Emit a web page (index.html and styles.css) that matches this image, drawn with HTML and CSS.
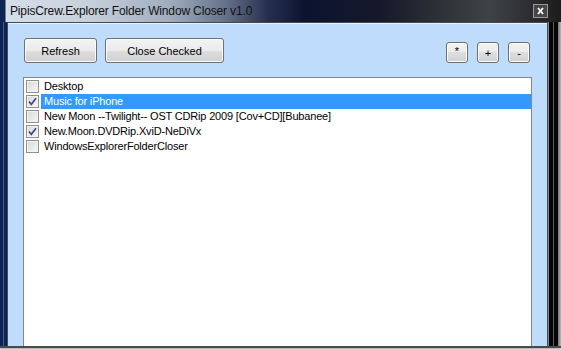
FILE: index.html
```html
<!DOCTYPE html>
<html lang="en">
<head>
    <meta charset="UTF-8">
    <meta name="viewport" content="width=device-width, initial-scale=1.0">
    <title>PipisCrew.Explorer Folder Window Closer v1.0</title>
    <link rel="stylesheet" href="styles.css">
</head>
<body>
    <div class="window">
        <!-- Title bar -->
        <div class="titlebar">
            <span class="title">PipisCrew.Explorer Folder Window Closer v1.0</span>
            <span class="close-x">
                <svg width="13" height="12" viewBox="0 0 13 12">
                    <path d="M4 3 L9 9 M9 3 L4 9" stroke="#fff" stroke-width="1.8" fill="none"/>
                </svg>
            </span>
        </div>

        <div class="frame">
            <div class="edge-left"></div>
            <div class="client">
                <!-- Toolbar -->
                <div class="toolbar">
                    <button class="btn btn-refresh">Refresh</button>
                    <button class="btn btn-close">Close Checked</button>
                    <div class="small-buttons">
                        <button class="btn btn-small btn-star">*</button>
                        <button class="btn btn-small">+</button>
                        <button class="btn btn-small">-</button>
                    </div>
                </div>

                <!-- Folder list -->
                <div class="listbox">
                    <div class="item">
                        <span class="box"></span>
                        <span class="label">Desktop</span>
                    </div>
                    <div class="item">
                        <span class="box"><svg width="11" height="11" viewBox="0 0 11 11"><path d="M2 5.5 L4.3 8.3 L9 2.2" stroke="#3b4d86" stroke-width="1.7" fill="none"/></svg></span>
                        <span class="label selected">Music for iPhone</span>
                    </div>
                    <div class="item">
                        <span class="box"></span>
                        <span class="label">New Moon --Twilight-- OST CDRip 2009 [Cov+CD][Bubanee]</span>
                    </div>
                    <div class="item">
                        <span class="box"><svg width="11" height="11" viewBox="0 0 11 11"><path d="M2 5.5 L4.3 8.3 L9 2.2" stroke="#3b4d86" stroke-width="1.7" fill="none"/></svg></span>
                        <span class="label">New.Moon.DVDRip.XviD-NeDiVx</span>
                    </div>
                    <div class="item">
                        <span class="box"></span>
                        <span class="label">WindowsExplorerFolderCloser</span>
                    </div>
                </div>
            </div>
            <div class="edge-right"></div>
        </div>
    </div>
</body>
</html>
```

FILE: styles.css
```css
html, body {
    margin: 0;
    padding: 0;
}
body {
    width: 561px;
    height: 350px;
    overflow: hidden;
    background: #f2f2f2;
    font-family: "Liberation Sans", Arial, sans-serif;
}
.window {
    height: 346px;
    display: flex;
    flex-direction: column;
    border-bottom: 2px solid #4a4a4a;
    box-shadow: 0 1px 2px rgba(0, 0, 0, 0.35);
    overflow: hidden;
}
.titlebar {
    height: 22px;
    flex: none;
    display: flex;
    align-items: center;
    background: linear-gradient(to right, #0c2553 0, #0c2553 5px, #d6dee8 6px, #c6d0dc 90px, #a0acbe 170px, #66728a 225px, #26304e 268px, #0c1330 305px, #15192a 380px, #2e3136 440px, #3f4246 490px, #2c2d30 530px, #1c1c1c 561px);
}
.title {
    margin-left: 10px;
    font-size: 12px;
    letter-spacing: -0.15px;
    color: #111;
}
.close-x {
    margin-left: auto;
    margin-right: 13px;
    width: 13px;
    height: 12px;
    border: 1px solid #9a9a9a;
    background: #464646;
    display: flex;
}
.frame {
    flex: 1;
    display: flex;
    min-height: 0;
}
.edge-left {
    width: 7px;
    background: linear-gradient(to right, #0b2452 0, #0b2452 3px, #3f5f90 3px, #3f5f90 4px, #0b2452 4px);
}
.edge-right {
    width: 13px;
    background: linear-gradient(to right, #8a8a8a 0, #8a8a8a 1px, #060606 1px, #060606 5px, #5c5c5c 5px, #5c5c5c 6px, #060606 6px, #060606 10px, #777 10px, #bbb 13px);
}
.client {
    flex: 1;
    display: flex;
    flex-direction: column;
    background: #bfdcfd;
    border: 1px solid #4a4a4a;
    border-bottom: none;
    box-shadow: inset 0 1px 0 #e9f1fb;
    min-height: 0;
}
.toolbar {
    display: flex;
    align-items: flex-end;
    gap: 8px;
    padding: 15px 17px 0 16px;
}
.btn {
    box-sizing: border-box;
    height: 25px;
    padding: 0;
    border: 1px solid #707070;
    border-radius: 3px;
    background: linear-gradient(#f3f3f3 0%, #ebebeb 50%, #dedede 50%, #d0d0d0 100%);
    box-shadow: inset 0 0 0 1px #fbfbfb;
    font-family: "Liberation Sans", Arial, sans-serif;
    font-size: 11px;
    color: #000;
}
.btn-refresh {
    width: 73px;
}
.btn-close {
    width: 119px;
}
.small-buttons {
    margin-left: auto;
    display: flex;
    gap: 9px;
}
.btn-small {
    width: 22px;
    height: 21px;
    font-size: 11px;
}
.btn-star {
    padding-bottom: 4px;
}
.listbox {
    flex: 1;
    margin: 14px 15px 0 15px;
    padding-top: 1px;
    background: #fff;
    border: 1px solid #828790;
    border-bottom: none;
}
.item {
    display: flex;
    align-items: center;
    height: 15px;
}
.box {
    box-sizing: border-box;
    width: 13px;
    height: 13px;
    margin-left: 2px;
    border: 1px solid #8f8f8f;
    background: linear-gradient(135deg, #d8d8d8, #f7f7f7);
    box-shadow: inset 0 0 0 1px #f4f4f4;
    display: flex;
    align-items: center;
    justify-content: center;
}
.label {
    flex: 1;
    margin-left: 2px;
    padding-left: 3px;
    height: 15px;
    line-height: 15px;
    font-size: 11px;
    letter-spacing: -0.18px;
    color: #000;
    white-space: nowrap;
}
.label.selected {
    background: #3399ff;
    color: #fff;
}
```
